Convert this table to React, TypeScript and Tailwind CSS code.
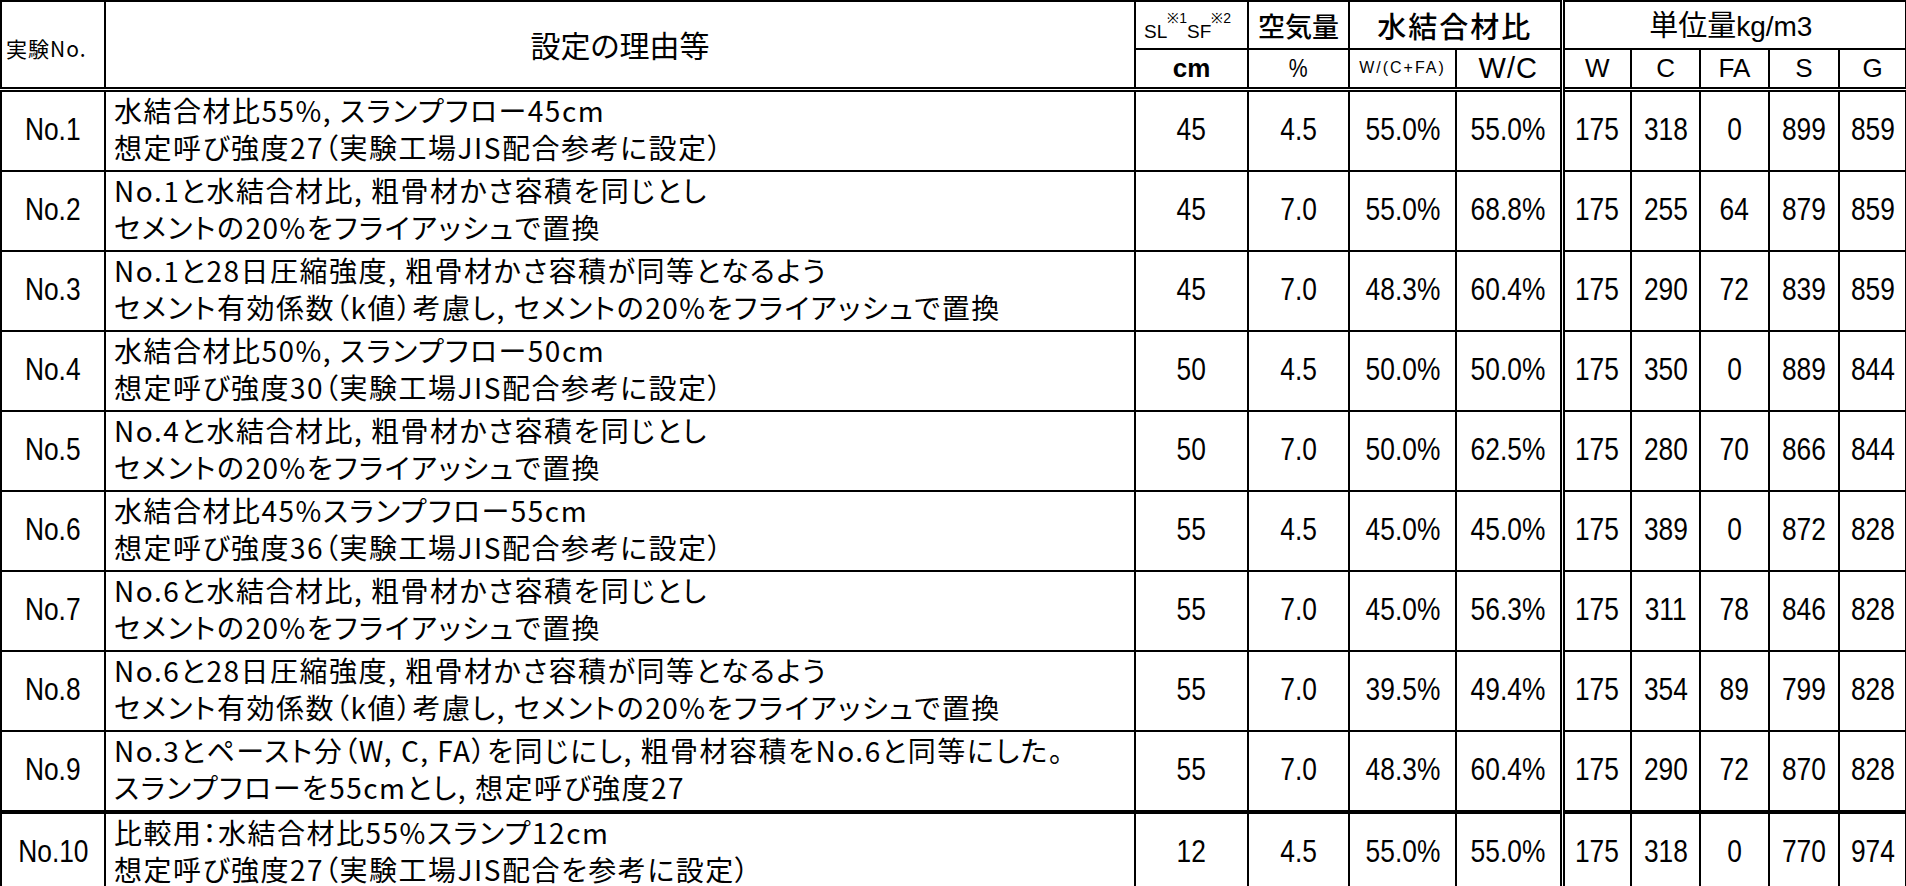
import React from 'react'

type Row = {
  no: string
  reason: [string, string]
  vals: string[]
}

const rows: Row[] = [
  { no: 'No.1', reason: ['水結合材比55%, スランプフロー45cm', '想定呼び強度27（実験工場JIS配合参考に設定）'], vals: ['45', '4.5', '55.0%', '55.0%', '175', '318', '0', '899', '859'] },
  { no: 'No.2', reason: ['No.1と水結合材比, 粗骨材かさ容積を同じとし', 'セメントの20%をフライアッシュで置換'], vals: ['45', '7.0', '55.0%', '68.8%', '175', '255', '64', '879', '859'] },
  { no: 'No.3', reason: ['No.1と28日圧縮強度, 粗骨材かさ容積が同等となるよう', 'セメント有効係数（k値）考慮し, セメントの20%をフライアッシュで置換'], vals: ['45', '7.0', '48.3%', '60.4%', '175', '290', '72', '839', '859'] },
  { no: 'No.4', reason: ['水結合材比50%, スランプフロー50cm', '想定呼び強度30（実験工場JIS配合参考に設定）'], vals: ['50', '4.5', '50.0%', '50.0%', '175', '350', '0', '889', '844'] },
  { no: 'No.5', reason: ['No.4と水結合材比, 粗骨材かさ容積を同じとし', 'セメントの20%をフライアッシュで置換'], vals: ['50', '7.0', '50.0%', '62.5%', '175', '280', '70', '866', '844'] },
  { no: 'No.6', reason: ['水結合材比45%スランプフロー55cm', '想定呼び強度36（実験工場JIS配合参考に設定）'], vals: ['55', '4.5', '45.0%', '45.0%', '175', '389', '0', '872', '828'] },
  { no: 'No.7', reason: ['No.6と水結合材比, 粗骨材かさ容積を同じとし', 'セメントの20%をフライアッシュで置換'], vals: ['55', '7.0', '45.0%', '56.3%', '175', '311', '78', '846', '828'] },
  { no: 'No.8', reason: ['No.6と28日圧縮強度, 粗骨材かさ容積が同等となるよう', 'セメント有効係数（k値）考慮し, セメントの20%をフライアッシュで置換'], vals: ['55', '7.0', '39.5%', '49.4%', '175', '354', '89', '799', '828'] },
  { no: 'No.9', reason: ['No.3とペースト分（W, C, FA）を同じにし, 粗骨材容積をNo.6と同等にした。', 'スランプフローを55cmとし, 想定呼び強度27'], vals: ['55', '7.0', '48.3%', '60.4%', '175', '290', '72', '870', '828'] },
  { no: 'No.10', reason: ['比較用：水結合材比55%スランプ12cm', '想定呼び強度27（実験工場JIS配合を参考に設定）'], vals: ['12', '4.5', '55.0%', '55.0%', '175', '318', '0', '770', '974'] },
]

const jp = "font-['Noto_Sans_CJK_JP','Noto_Sans',sans-serif] [font-feature-settings:'palt']"
const lat = "font-['Liberation_Sans',sans-serif]"

// narrow digits like the spreadsheet font
function Num({ children }: { children: React.ReactNode }) {
  return <span className="inline-block scale-x-[0.85] whitespace-nowrap">{children}</span>
}

export default function App() {
  const cell = 'border-2 border-black text-center p-0'
  const split = 'border-l-[5px] border-l-black border-double'

  return (
    <div className="w-[1906px] h-[886px] bg-white text-black">
      <table className="table-fixed border-collapse w-[1905px]">
        <colgroup>
          <col className="w-[104px]" />
          <col className="w-[1030px]" />
          <col className="w-[113px]" />
          <col className="w-[101px]" />
          <col className="w-[107px]" />
          <col className="w-[106px]" />
          <col className="w-[69px]" />
          <col className="w-[69px]" />
          <col className="w-[69px]" />
          <col className="w-[70px]" />
          <col className="w-[67px]" />
        </colgroup>
        <thead>
          <tr className="h-[48px]">
            <th rowSpan={2} className={`${cell} ${jp} text-left font-normal text-[21px] pl-1 pt-2 tracking-[1px]`}>
              実験No.
            </th>
            <th rowSpan={2} className={`${cell} ${jp} font-normal text-[30px]`}>
              設定の理由等
            </th>
            <th className={`${cell} ${lat} font-normal text-left pl-2 pt-3 text-[19px] leading-none whitespace-nowrap`}>
              SL<sup className="text-[14px] align-[8px]">※1</sup>SF<sup className="text-[14px] align-[8px]">※2</sup>
            </th>
            <th className={`${cell} ${jp} font-medium text-[27px] leading-none`}>空気量</th>
            <th colSpan={2} className={`${cell} ${jp} font-medium text-[29px] tracking-[2px] leading-none`}>
              水結合材比
            </th>
            <th colSpan={5} className={`${cell} ${split} ${jp} font-normal text-[29px] leading-none`}>
              <span className="-ml-2">
                単位量<span className={`${lat} text-[28px]`}>kg/m3</span>
              </span>
            </th>
          </tr>
          <tr className="h-[40px] border-b-[5px] border-b-black border-double">
            <th className={`${cell} ${lat} font-bold text-[26px] leading-none`}>cm</th>
            <th className={`${cell} ${lat} font-normal text-[25px] leading-none`}>
              <Num>%</Num>
            </th>
            <th className={`${cell} ${lat} font-normal text-[16px] tracking-[2px] leading-none whitespace-nowrap`}>
              W/(C+FA)
            </th>
            <th className={`${cell} ${lat} font-normal text-[29px] tracking-[1px] leading-none`}>W/C</th>
            <th className={`${cell} ${split} ${lat} font-normal text-[26px] leading-none`}>W</th>
            <th className={`${cell} ${lat} font-normal text-[26px] leading-none`}>C</th>
            <th className={`${cell} ${lat} font-normal text-[26px] leading-none`}>FA</th>
            <th className={`${cell} ${lat} font-normal text-[26px] leading-none`}>S</th>
            <th className={`${cell} ${lat} font-normal text-[26px] leading-none`}>G</th>
          </tr>
        </thead>
        <tbody>
          {rows.map((r, i) => {
            const last = i === rows.length - 1
            return (
              <tr key={r.no} className={`h-[79.4px] ${last ? 'border-t-4 border-t-black' : ''}`}>
                <td className={`${cell} ${lat} text-[31px]`}>
                  <Num>{r.no}</Num>
                </td>
                <td className={`border-2 border-black p-0 ${jp} text-left text-[28px] tracking-[1.5px] leading-[37px] pl-2 pb-[4px] whitespace-nowrap`}>
                  <div>{r.reason[0]}</div>
                  <div>{r.reason[1]}</div>
                </td>
                {r.vals.map((v, j) => (
                  <td key={j} className={`${cell} ${j === 4 ? split : ''} ${lat} text-[31px]`}>
                    <Num>{v}</Num>
                  </td>
                ))}
              </tr>
            )
          })}
        </tbody>
      </table>
    </div>
  )
}
